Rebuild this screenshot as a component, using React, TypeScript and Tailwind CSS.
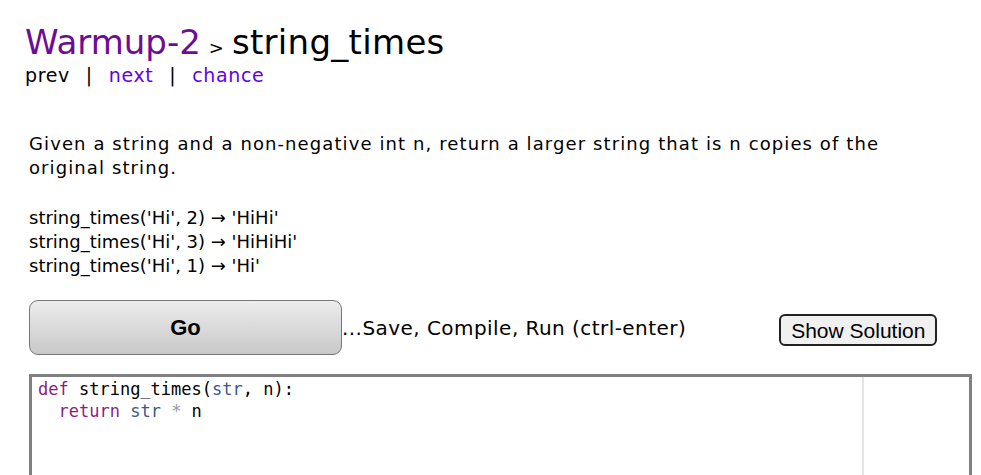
import React from "react";

export default function App() {
  return (
    <div className="min-h-[475px] w-full bg-white text-black">
      {/* Heading */}
      <div className="pl-[25px] pt-[25px]">
        <div className="flex items-baseline font-['DejaVu_Sans',sans-serif] leading-none">
          <a className="text-[34px] text-[#6e0c96]">Warmup-2</a>
          <span className="mx-[8px] text-[18px]">&gt;</span>
          <span className="text-[34px] tracking-[0.3px]">string_times</span>
        </div>
        <div className="mt-[4px] font-['DejaVu_Sans',sans-serif] text-[19px] leading-[24px] tracking-[0.6px]">
          <span>prev</span>
          <span className="mx-[16px]">|</span>
          <a className="text-[#6200e8]">next</a>
          <span className="mx-[16px]">|</span>
          <a className="text-[#6200e8]">chance</a>
        </div>
      </div>

      {/* Problem statement */}
      <div className="mt-[45px] pl-[29px] pr-[60px] font-['DejaVu_Sans',sans-serif] text-[18px] leading-[24px]">
        <p className="tracking-[1.1px]">
          Given a string and a non-negative int n, return a larger string that is n copies of the
          original string.
        </p>
        <div className="mt-[26px]">
          <div>string_times('Hi', 2) → 'HiHi'</div>
          <div>string_times('Hi', 3) → 'HiHiHi'</div>
          <div>string_times('Hi', 1) → 'Hi'</div>
        </div>
      </div>

      {/* Controls */}
      <div className="mt-[22px] flex items-center pl-[29px]">
        <button className="h-[55px] w-[313px] rounded-[9px] border border-[#777] bg-gradient-to-b from-[#ededed] to-[#c8c8c8] font-['Liberation_Sans',sans-serif] text-[22px] font-bold">
          Go
        </button>
        <span className="font-['DejaVu_Sans',sans-serif] text-[20px] tracking-[0.45px]">...Save, Compile, Run (ctrl-enter)</span>
        <button className="ml-[93px] mt-[5px] h-[32px] rounded-[6px] border-2 border-[#222] bg-[#f0f0f0] px-[10px] font-['Liberation_Sans',sans-serif] text-[21px] leading-none">
          Show Solution
        </button>
      </div>

      {/* Editor */}
      <div className="mx-[29px] mt-[19px] flex h-[120px] w-[943px] border-[3px] border-[#808080]">
        <pre className="flex-1 border-r-2 border-[#e6e6e6] px-[6px] pt-[1px] font-['DejaVu_Sans_Mono',monospace] text-[17px] leading-[22px]">
          <span className="text-[#8a1d86]">def</span> string_times(<span className="text-[#3b5a8c]">str</span>, n):{"\n"}
          {"  "}<span className="text-[#8a1d86]">return</span> <span className="text-[#3b5a8c]">str</span> <span className="text-[#999]">*</span> n
        </pre>
        <div className="w-[105px]" />
      </div>
    </div>
  );
}
